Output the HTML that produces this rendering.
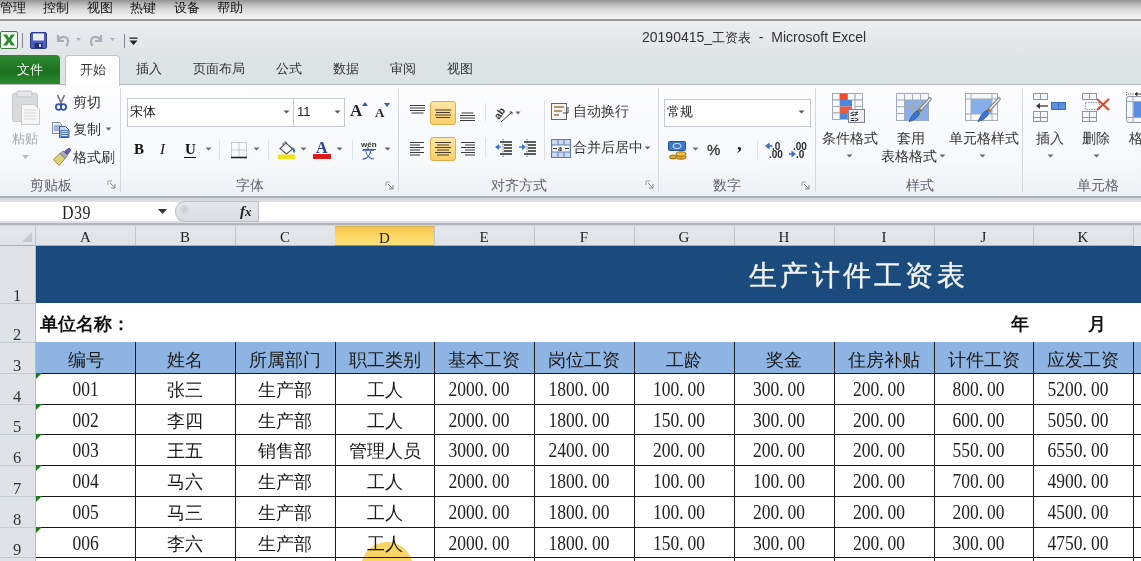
<!DOCTYPE html>
<html><head><meta charset="utf-8">
<style>
*{box-sizing:border-box;margin:0;padding:0}
html,body{width:1141px;height:561px;overflow:hidden;background:#fff}
body{position:relative;font-family:"Liberation Sans",sans-serif;color:#222}
.a{position:absolute;white-space:nowrap}
#menubar{left:0;top:0;width:1141px;height:19px;background:linear-gradient(#939393,#c2c2c2 28%,#d9d9d9 50%,#ebebeb 78%,#f6f6f6)}
#menubar span{position:absolute;top:0;font-size:13px;line-height:15px;color:#111}
#mline{left:0;top:19px;width:1141px;height:2px;background:#9a9a9a;box-shadow:0 1px 0 #f7f7f7}
#titlebar{left:0;top:21px;width:1141px;height:63px;background:linear-gradient(#eceef1,#e7e8eb 25%,#e2e4e6 55%,#dee3e5 58%,#dde2e5)}
#ribbon{left:0;top:84px;width:1141px;height:114px;background:linear-gradient(#fdfdfe,#f6f8fa 70%,#eef1f5);border-top:1px solid #b3b8bd;border-bottom:2px solid #aab0b6}
.tab{position:absolute;top:61px;font-size:13px;line-height:16px;color:#333}
.sep{position:absolute;top:88px;width:1px;height:104px;background:#d5d9de}
.glabel{position:absolute;top:177px;font-size:12px;line-height:14px;color:#5b6470}
.rt{position:absolute;font-size:12px;line-height:14px;color:#333}
#fbar{left:0;top:198px;width:1141px;height:28px;background:linear-gradient(#d3d7dc,#dde1e5 12%,#e0e3e7 85%,#d0d4d9)}
#namebox{left:0;top:202px;width:178px;height:19px;background:#fff}
#finput{left:259px;top:202px;width:882px;height:19px;background:#fff}
#colhdr{left:0;top:226px;width:1141px;height:20px;background:linear-gradient(#e4e7eb,#dfe2e7)}
.ch{position:absolute;top:0;height:20px;border-right:1px solid #c0c6ce;border-bottom:1px solid #a7afb8;font-family:"Liberation Serif",serif;font-size:15px;line-height:22px;text-align:center;color:#222}
#rowhdr{left:0;top:246px;width:36px;height:315px;background:#dfe3e8;border-right:1px solid #b9bfc7}
.rh{position:absolute;left:0;width:35px;height:1px;background:#c5cad1}
.rn{position:absolute;left:13px;font-family:"Liberation Serif",serif;font-size:16.5px;line-height:16px;color:#333}
.ttl{font-family:"Liberation Serif",serif;font-size:28px;line-height:40px;color:#f4f6f8;letter-spacing:3.3px;-webkit-text-stroke:0.35px #f4f6f8}
.b2{font-size:18px;line-height:22px;font-weight:bold;color:#111}
.hl{left:36px;width:1105px;height:1px;background:#1a1a1a}
.vl{top:342px;width:1px;height:219px;background:#1a1a1a}
.ct{text-align:center;font-size:18px;line-height:22px;color:#1a1a1a}
.num{text-align:center;font-family:"Liberation Serif",serif;font-size:17.5px;line-height:20px;color:#222;transform:scaleY(1.15);transform-origin:50% 80%}
.tri{width:0;height:0;border-top:6px solid #1e7a1e;border-right:6px solid transparent}
</style></head><body>
<div id="menubar" class="a">
<span style="left:0">管理</span><span style="left:43px">控制</span><span style="left:87px">视图</span><span style="left:130px">热键</span><span style="left:174px">设备</span><span style="left:217px">帮助</span>
</div>
<div id="mline" class="a"></div>
<div id="titlebar" class="a"></div>
<div class="a" style="left:642px;top:28px;font-size:14px;line-height:18px;color:#333">20190415_<span style="font-size:13px">工资表</span> &nbsp;-&nbsp; Microsoft Excel</div>

<div class="a" style="left:0;top:55px;width:60px;height:30px;background:linear-gradient(#2f8a33,#1c7020 55%,#2c8d30);border-radius:0 4px 0 0;color:#f4f8f0;font-size:13px;line-height:30px;text-align:center">文件</div>
<div class="a" style="left:65px;top:55px;width:55px;height:31px;background:#fff;border:1px solid #bfc5cc;border-bottom:none;border-radius:4px 4px 0 0;font-size:13px;line-height:27px;text-align:center;color:#333;z-index:3">开始</div>
<div class="tab" style="left:136px">插入</div>
<div class="tab" style="left:193px">页面布局</div>
<div class="tab" style="left:276px">公式</div>
<div class="tab" style="left:333px">数据</div>
<div class="tab" style="left:390px">审阅</div>
<div class="tab" style="left:447px">视图</div>

<div id="ribbon" class="a"></div>

<div id="fbar" class="a"></div>
<div class="a" style="left:0;top:223px;width:1141px;height:2px;background:#b3b7bc"></div>
<div id="namebox" class="a"></div>
<div id="finput" class="a"></div>
<div class="a" style="left:62px;top:204px;font-family:'Liberation Serif',serif;font-size:16px;line-height:18px;color:#222;letter-spacing:0.5px;transform:scaleY(1.12)">D39</div>

<div id="colhdr" class="a">
<div class="ch" style="left:0;width:36px"></div>
<div class="ch" style="left:36px;width:100px">A</div>
<div class="ch" style="left:135px;width:101px">B</div>
<div class="ch" style="left:235px;width:101px">C</div>
<div class="ch" style="left:335px;width:100px;background:linear-gradient(#f7c44e,#fcd968 60%,#fde07a);border-top:1px solid #d9b25a;border-bottom-color:#a08850">D</div>
<div class="ch" style="left:434px;width:101px">E</div>
<div class="ch" style="left:534px;width:101px">F</div>
<div class="ch" style="left:634px;width:101px">G</div>
<div class="ch" style="left:734px;width:101px">H</div>
<div class="ch" style="left:834px;width:101px">I</div>
<div class="ch" style="left:934px;width:100px">J</div>
<div class="ch" style="left:1033px;width:101px">K</div>
</div>

<div id="rowhdr" class="a"></div>
<div class="rh a" style="top:303px"></div>
<div class="rn a" style="top:288px">1</div>
<div class="rh a" style="top:342px"></div>
<div class="rn a" style="top:327px">2</div>
<div class="rh a" style="top:373px"></div>
<div class="rn a" style="top:358px">3</div>
<div class="rh a" style="top:404px"></div>
<div class="rn a" style="top:389px">4</div>
<div class="rh a" style="top:434px"></div>
<div class="rn a" style="top:419px">5</div>
<div class="rh a" style="top:465px"></div>
<div class="rn a" style="top:450px">6</div>
<div class="rh a" style="top:496px"></div>
<div class="rn a" style="top:481px">7</div>
<div class="rh a" style="top:527px"></div>
<div class="rn a" style="top:512px">8</div>
<div class="rh a" style="top:557px"></div>
<div class="rn a" style="top:542px">9</div>

<!-- QAT -->
<svg class="a" style="left:0;top:31px" width="18" height="18" viewBox="0 0 18 18"><rect x="0.5" y="0.5" width="17" height="17" rx="1.5" fill="#f4f8f2" stroke="#3f7d46"/><path d="M3 3.5h4l2 3.5 2-3.5h4l-4 5.5 4 5.5h-4l-2-3.5-2 3.5H3l4-5.5z" fill="#2f8a36"/></svg>
<div class="a" style="left:22px;top:33px;width:1px;height:15px;background:#7d8590"></div>
<svg class="a" style="left:30px;top:32px" width="17" height="17" viewBox="0 0 17 17"><rect x="0.5" y="0.5" width="16" height="16" rx="1.5" fill="#4a5fbf" stroke="#2c3a8c"/><rect x="3" y="1.5" width="11" height="7" fill="#e9eef8"/><rect x="4.5" y="11" width="8" height="5" fill="#23306e"/><rect x="9" y="12" width="2" height="3" fill="#cfd6ec"/></svg>
<svg class="a" style="left:55px;top:33px" width="28" height="15" viewBox="0 0 28 15"><path d="M3 2v6h6M3.5 7.5C5 4 8.5 3 11 4.5c2.5 1.5 2.8 5.5 0.5 8.5" fill="none" stroke="#a9afb7" stroke-width="2.2"/><path d="M21 5h5l-2.5 3z" fill="#a9afb7"/></svg>
<svg class="a" style="left:89px;top:33px" width="28" height="15" viewBox="0 0 28 15"><path d="M12 2v6H6M11.5 7.5C10 4 6.5 3 4 4.5 1.5 6 1.2 10 3.5 13" fill="none" stroke="#a9afb7" stroke-width="2.2"/><path d="M21 5h5l-2.5 3z" fill="#a9afb7"/></svg>
<div class="a" style="left:124px;top:34px;width:1px;height:14px;background:#7d8590"></div>
<svg class="a" style="left:129px;top:37px" width="9" height="9" viewBox="0 0 9 9"><rect x="0.5" y="0.5" width="8" height="1.3" fill="#222"/><path d="M0.5 3.5h8L4.5 8z" fill="#222"/></svg>

<!-- group separators -->
<div class="sep" style="left:120px"></div>
<div class="sep" style="left:398px"></div>
<div class="sep" style="left:658px"></div>
<div class="sep" style="left:815px"></div>
<div class="sep" style="left:1022px"></div>

<!-- Clipboard -->
<svg class="a" style="left:11px;top:90px" width="31" height="35" viewBox="0 0 31 35"><rect x="1.5" y="3.5" width="25" height="28" rx="2" fill="#d9dadc" stroke="#c4c6c9"/><rect x="6" y="1" width="15" height="6" rx="1.5" fill="#e6e7e8" stroke="#bdbfc2"/><path d="M10.5 14.5h13l5 5v15h-18z" fill="#f6f6f6" stroke="#c9cacc"/><path d="M13 20h12M13 23h12M13 26h12M13 29h12" stroke="#d8d8d8"/></svg>
<div class="rt" style="left:12px;top:132px;color:#a4a6a9;font-size:13px">粘贴</div>
<svg class="a" style="left:22px;top:155px" width="7" height="5" viewBox="0 0 7 5"><path d="M0 0h7L3.5 4z" fill="#b5b8bc"/></svg>
<svg class="a" style="left:54px;top:94px" width="14" height="17" viewBox="0 0 14 17"><path d="M3.5 1l4.5 10M10.5 1L6 11" stroke="#6d7178" stroke-width="1.6"/><ellipse cx="4.5" cy="13" rx="2.6" ry="2.8" fill="#fff" stroke="#2f55a8" stroke-width="1.8"/><ellipse cx="9.5" cy="13" rx="2.6" ry="2.8" fill="#fff" stroke="#2f55a8" stroke-width="1.8"/></svg>
<div class="rt" style="left:73px;top:96px;font-size:13.5px">剪切</div>
<svg class="a" style="left:52px;top:122px" width="18" height="16" viewBox="0 0 18 16"><path d="M0.5 0.5h7l2 2v9h-9z" fill="#e9eef6" stroke="#7b8fb3"/><path d="M2 4h6M2 6h6M2 8h6" stroke="#5d79b0"/><path d="M7.5 4.5h6l3.5 3.5v7.5h-9.5z" fill="#cfdcf0" stroke="#3a5c9c"/><rect x="8.5" y="8" width="8" height="7" fill="#4d77c0"/><path d="M9.5 9.5h6M9.5 11.5h6M9.5 13.5h6" stroke="#d9e6f8"/></svg>
<div class="rt" style="left:73px;top:123px;font-size:13.5px">复制</div>
<svg class="a" style="left:105px;top:127px" width="7" height="5" viewBox="0 0 7 5"><path d="M0.5 0.5h6L3.5 3.5z" fill="#666"/></svg>
<svg class="a" style="left:52px;top:147px" width="20" height="20" viewBox="0 0 20 20"><path d="M1.5 12.5l6.5-6 5 5-6 7z" fill="#e8d978" stroke="#8b7c3a" stroke-width="0.9"/><path d="M4 14l5-4M6 16l4.5-4" stroke="#c9b450" stroke-width="0.8"/><path d="M8 6.5l3-2.5 4.5 4.5-2.5 3z" fill="#a9aeb6" stroke="#6b7079" stroke-width="0.8"/><path d="M12.5 4.5l4.5-3.5 2 2-3.5 4.5z" fill="#6c5fbf" stroke="#3f3790" stroke-width="0.8"/></svg>
<div class="rt" style="left:73px;top:151px;font-size:13.5px">格式刷</div>
<div class="glabel" style="left:30px;top:179px;font-size:13.5px">剪贴板</div>

<!-- launcher icons -->
<svg class="a" style="left:107px;top:180px" width="9" height="9" viewBox="0 0 9 9"><path d="M1 1h4M1 1v4" stroke="#9aa1aa"/><path d="M3 3l5 5M8 4v4H4" stroke="#7d8590" fill="none"/></svg>
<svg class="a" style="left:385px;top:181px" width="9" height="9" viewBox="0 0 9 9"><path d="M1 1h4M1 1v4" stroke="#9aa1aa"/><path d="M3 3l5 5M8 4v4H4" stroke="#7d8590" fill="none"/></svg>
<svg class="a" style="left:645px;top:180px" width="9" height="9" viewBox="0 0 9 9"><path d="M1 1h4M1 1v4" stroke="#9aa1aa"/><path d="M3 3l5 5M8 4v4H4" stroke="#7d8590" fill="none"/></svg>
<svg class="a" style="left:801px;top:181px" width="9" height="9" viewBox="0 0 9 9"><path d="M1 1h4M1 1v4" stroke="#9aa1aa"/><path d="M3 3l5 5M8 4v4H4" stroke="#7d8590" fill="none"/></svg>

<!-- Font group -->
<div class="a" style="left:127px;top:98px;width:167px;height:29px;background:#fff;border:1px solid #c5cad0"></div>
<div class="a" style="left:293px;top:98px;width:52px;height:29px;background:#fff;border:1px solid #c5cad0"></div>
<div class="rt" style="left:130px;top:104px;font-size:13px;line-height:15px;color:#222">宋体</div>
<div class="rt" style="left:297px;top:104px;font-size:13px;line-height:15px;color:#222">11</div>
<svg class="a" style="left:283px;top:110px" width="7" height="5" viewBox="0 0 7 5"><path d="M0.5 0.5h6L3.5 3.5z" fill="#555"/></svg>
<svg class="a" style="left:334px;top:110px" width="7" height="5" viewBox="0 0 7 5"><path d="M0.5 0.5h6L3.5 3.5z" fill="#555"/></svg>
<div class="a" style="left:350px;top:102px;font-family:'Liberation Serif',serif;font-weight:bold;font-size:17px;line-height:18px;color:#222">A</div>
<svg class="a" style="left:362px;top:102px" width="6" height="4" viewBox="0 0 6 4"><path d="M0 4h6L3 0z" fill="#2f5fa8"/></svg>
<div class="a" style="left:375px;top:106px;font-family:'Liberation Serif',serif;font-weight:bold;font-size:13px;line-height:14px;color:#222">A</div>
<svg class="a" style="left:384px;top:103px" width="6" height="4" viewBox="0 0 6 4"><path d="M0 0h6L3 4z" fill="#2f5fa8"/></svg>
<div class="a" style="left:134px;top:141px;font-family:'Liberation Serif',serif;font-weight:bold;font-size:15px;line-height:17px;color:#111">B</div>
<div class="a" style="left:160px;top:141px;font-family:'Liberation Serif',serif;font-style:italic;font-size:15px;line-height:17px;color:#111">I</div>
<div class="a" style="left:185px;top:141px;font-family:'Liberation Serif',serif;font-weight:bold;font-size:15px;line-height:17px;color:#111">U</div>
<div class="a" style="left:184px;top:157px;width:12px;height:1px;background:#111"></div>
<svg class="a" style="left:205px;top:147px" width="7" height="5" viewBox="0 0 7 5"><path d="M0.5 0.5h6L3.5 3.5z" fill="#666"/></svg>
<div class="a" style="left:219px;top:140px;width:1px;height:20px;background:#dde0e4"></div>
<svg class="a" style="left:231px;top:142px" width="16" height="17" viewBox="0 0 16 17"><path d="M0.5 0.5h15v15M0.5 0.5v15M8 0.5v15M0.5 8h15" stroke="#9aa0a8" stroke-dasharray="1 1" fill="none"/><path d="M0 15.5h16" stroke="#222" stroke-width="1.6"/></svg>
<svg class="a" style="left:253px;top:147px" width="7" height="5" viewBox="0 0 7 5"><path d="M0.5 0.5h6L3.5 3.5z" fill="#666"/></svg>
<div class="a" style="left:268px;top:140px;width:1px;height:20px;background:#dde0e4"></div>
<svg class="a" style="left:277px;top:140px" width="19" height="20" viewBox="0 0 19 20"><path d="M3 8.5l6-5.5 6.5 6-6 5z" fill="#fff" stroke="#555" stroke-width="1.1"/><path d="M6 5c0-3 3-4 4-2" stroke="#555" fill="none"/><path d="M14 8c2.5 0 3.5 2 3 4.5" stroke="#3d6fc2" stroke-width="2" fill="none"/><rect x="1" y="14.5" width="17" height="4.5" fill="#f2e21c"/></svg>
<svg class="a" style="left:300px;top:147px" width="7" height="5" viewBox="0 0 7 5"><path d="M0.5 0.5h6L3.5 3.5z" fill="#666"/></svg>
<div class="a" style="left:316px;top:141px;font-family:'Liberation Serif',serif;font-weight:bold;font-size:16px;line-height:14px;color:#243f8c">A</div>
<div class="a" style="left:313px;top:154px;width:18px;height:5px;background:#e11b1b"></div>
<svg class="a" style="left:336px;top:147px" width="7" height="5" viewBox="0 0 7 5"><path d="M0.5 0.5h6L3.5 3.5z" fill="#666"/></svg>
<div class="a" style="left:352px;top:140px;width:1px;height:20px;background:#dde0e4"></div>
<div class="a" style="left:361px;top:141px;font-size:8px;line-height:8px;color:#333;font-weight:bold">wén</div><div class="a" style="left:363px;top:149px;width:13px;height:1px;background:#3a5aa8"></div>
<div class="a" style="left:362px;top:147px;font-size:13px;line-height:13px;color:#3a5aa8">文</div>
<svg class="a" style="left:384px;top:147px" width="7" height="5" viewBox="0 0 7 5"><path d="M0.5 0.5h6L3.5 3.5z" fill="#666"/></svg>
<div class="glabel" style="left:236px;top:179px;font-size:13.5px">字体</div>

<!-- Alignment group -->
<svg class="a" style="left:409px;top:104px" width="17" height="10" viewBox="0 0 17 10"><path d="M1 1.5h15M1 4h15M1 6.5h15M2.5 9h12" stroke="#3a3a3a" stroke-width="1.2"/></svg>
<div class="a" style="left:430px;top:101px;width:26px;height:24px;background:linear-gradient(#fde6a6,#fbcf68);border:1px solid #dcae4c;border-radius:3px"></div>
<svg class="a" style="left:434px;top:109px" width="18" height="10" viewBox="0 0 18 10"><path d="M1 1h16M2 3.5h14M1 6h16M2 8.5h14" stroke="#4a3e2a" stroke-width="1.2"/></svg>
<svg class="a" style="left:459px;top:112px" width="17" height="10" viewBox="0 0 17 10"><path d="M2.5 1h12M1 3.5h15M1 6h15M1 8.5h15" stroke="#3a3a3a" stroke-width="1.2"/></svg>
<svg class="a" style="left:409px;top:141px" width="17" height="15" viewBox="0 0 17 15"><path d="M1 1.5h14M1 4h10M1 6.5h14M1 9h10M1 11.5h14M1 14h10" stroke="#3a3a3a" stroke-width="1.2"/></svg>
<div class="a" style="left:430px;top:137px;width:26px;height:24px;background:linear-gradient(#fde6a6,#fbcf68);border:1px solid #dcae4c;border-radius:3px"></div>
<svg class="a" style="left:434px;top:141px" width="18" height="15" viewBox="0 0 18 15"><path d="M1 1.5h16M3 4h12M1 6.5h16M3 9h12M1 11.5h16M3 14h12" stroke="#4a3e2a" stroke-width="1.2"/></svg>
<svg class="a" style="left:459px;top:141px" width="17" height="15" viewBox="0 0 17 15"><path d="M2 1.5h14M6 4h10M2 6.5h14M6 9h10M2 11.5h14M6 14h10" stroke="#3a3a3a" stroke-width="1.2"/></svg>
<div class="a" style="left:485px;top:103px;width:1px;height:18px;background:#dde0e4"></div>
<div class="a" style="left:485px;top:138px;width:1px;height:20px;background:#dde0e4"></div>
<svg class="a" style="left:493px;top:103px" width="30" height="20" viewBox="0 0 30 20"><text x="0" y="0" transform="translate(6 17) rotate(-55)" font-family="Liberation Sans" font-weight="bold" font-size="10" fill="#333">ab</text><path d="M8 19L19 9M16.5 9h2.5v2.5" stroke="#444" stroke-width="1" fill="none"/><path d="M22.5 8.5h5l-2.5 3z" fill="#666"/></svg>
<svg class="a" style="left:494px;top:139px" width="19" height="18" viewBox="0 0 19 18"><path d="M9 0v18" stroke="#555" stroke-dasharray="1.2 1.2"/><path d="M6 3h12M10 6h8M10 9h8M10 12h8M6 15h12" stroke="#2a2a2a" stroke-width="1.3"/><path d="M1 8l4-3v6z" fill="#3a72c8"/><path d="M4 8h3" stroke="#3a72c8" stroke-width="1.3"/></svg>
<svg class="a" style="left:518px;top:139px" width="19" height="18" viewBox="0 0 19 18"><path d="M9 0v18" stroke="#555" stroke-dasharray="1.2 1.2"/><path d="M6 3h12M10 6h8M10 9h8M10 12h8M6 15h12" stroke="#2a2a2a" stroke-width="1.3"/><path d="M8 8l-4-3v6z" fill="#3a72c8"/><path d="M1 8h3" stroke="#3a72c8" stroke-width="1.3"/></svg>
<div class="a" style="left:544px;top:100px;width:1px;height:60px;background:#dde0e4"></div>
<svg class="a" style="left:551px;top:103px" width="20" height="18" viewBox="0 0 20 18"><rect x="0.5" y="0.5" width="15" height="16" fill="#f5f5f5" stroke="#666"/><path d="M3 4h10M3 8h8M3 12h5" stroke="#9a7a3a" stroke-width="1.5"/><path d="M17 4v6h-5" stroke="#444" fill="none"/></svg>
<div class="rt" style="left:573px;top:105px;font-size:13.5px">自动换行</div>
<svg class="a" style="left:551px;top:139px" width="20" height="19" viewBox="0 0 20 19"><rect x="0.5" y="0.5" width="19" height="18" fill="#c9daf2" stroke="#5c7ab0"/><rect x="2" y="6" width="16" height="7" fill="#fff"/><path d="M0.5 6h19M0.5 13h19M7 0.5v5M13 0.5v5M7 13.5v5M13 13.5v5" stroke="#5c7ab0"/><text x="7" y="12" font-family="Liberation Serif" font-weight="bold" font-size="8" fill="#222">a</text><path d="M2 9.5h4M14 9.5h4" stroke="#333"/></svg>
<div class="rt" style="left:573px;top:141px;font-size:13.5px">合并后居中</div>
<svg class="a" style="left:644px;top:146px" width="7" height="5" viewBox="0 0 7 5"><path d="M0.5 0.5h6L3.5 3.5z" fill="#666"/></svg>
<div class="glabel" style="left:491px;top:179px;font-size:13.5px">对齐方式</div>

<!-- Number group -->
<div class="a" style="left:664px;top:99px;width:147px;height:28px;background:#fff;border:1px solid #c5cad0"></div>
<div class="rt" style="left:667px;top:104px;font-size:13px;line-height:15px;color:#222">常规</div>
<svg class="a" style="left:798px;top:110px" width="7" height="5" viewBox="0 0 7 5"><path d="M0.5 0.5h6L3.5 3.5z" fill="#555"/></svg>
<svg class="a" style="left:668px;top:141px" width="20" height="19" viewBox="0 0 20 19"><rect x="0.5" y="0.5" width="17" height="9" rx="1" fill="#3d79c9" stroke="#24559a"/><ellipse cx="9" cy="5" rx="4" ry="2.6" fill="none" stroke="#d6e6f8"/><ellipse cx="13" cy="16" rx="5" ry="2.2" fill="#e0a82a" stroke="#9b6d12"/><ellipse cx="13" cy="13" rx="5" ry="2.2" fill="#efc04a" stroke="#9b6d12"/><ellipse cx="5" cy="16" rx="3.5" ry="2" fill="#e0a82a" stroke="#9b6d12"/></svg>
<svg class="a" style="left:692px;top:147px" width="7" height="5" viewBox="0 0 7 5"><path d="M0.5 0.5h6L3.5 3.5z" fill="#666"/></svg>
<div class="a" style="left:707px;top:142px;font-size:15px;line-height:16px;color:#333;-webkit-text-stroke:0.3px #333">%</div>
<div class="a" style="left:737px;top:136px;font-family:'Liberation Serif',serif;font-size:19px;line-height:16px;font-weight:bold;color:#222">,</div>
<div class="a" style="left:757px;top:140px;width:1px;height:20px;background:#dde0e4"></div>
<svg class="a" style="left:764px;top:141px" width="22" height="18" viewBox="0 0 22 18"><path d="M1 5l4.5-3.5v7z" fill="#3a6fc4"/><path d="M5 5h3.5" stroke="#3a6fc4" stroke-width="1.6"/><text x="8" y="9" font-family="Liberation Sans" font-weight="bold" font-size="10" fill="#2a2a2a">.0</text><text x="5" y="17" font-family="Liberation Sans" font-weight="bold" font-size="10" fill="#2a2a2a">.00</text></svg>
<svg class="a" style="left:788px;top:141px" width="22" height="18" viewBox="0 0 22 18"><text x="5" y="9" font-family="Liberation Sans" font-weight="bold" font-size="10" fill="#2a2a2a">.00</text><path d="M8 13l-4.5-3.5v7z" fill="#3a6fc4"/><path d="M1 13h3.5" stroke="#3a6fc4" stroke-width="1.6"/><text x="8" y="17" font-family="Liberation Sans" font-weight="bold" font-size="10" fill="#2a2a2a">.0</text></svg>
<div class="glabel" style="left:713px;top:179px;font-size:13.5px">数字</div>

<!-- Styles group -->
<svg class="a" style="left:831px;top:92px" width="36" height="32" viewBox="0 0 36 32"><g fill="#f6f8fb" stroke="#a3abb5"><rect x="1.5" y="1.5" width="7.5" height="6.5"/><rect x="9" y="1.5" width="7.5" height="6.5"/><rect x="16.5" y="1.5" width="7.5" height="6.5"/><rect x="24" y="1.5" width="7.5" height="6.5"/><rect x="1.5" y="8" width="7.5" height="6.5"/><rect x="24" y="8" width="7.5" height="6.5"/><rect x="1.5" y="14.5" width="7.5" height="6.5"/><rect x="24" y="14.5" width="7.5" height="6.5"/><rect x="1.5" y="21" width="7.5" height="6.5"/><rect x="16.5" y="21" width="7.5" height="6.5"/><rect x="24" y="21" width="7.5" height="6.5"/></g><rect x="9" y="1.5" width="7.5" height="6.5" fill="#ee4a2e"/><rect x="9" y="8" width="12" height="6.5" fill="#4d86dc"/><rect x="9" y="14.5" width="12" height="6.5" fill="#ee5a3e"/><rect x="9" y="21" width="7.5" height="6.5" fill="#4d86dc"/><rect x="17.5" y="17.5" width="16" height="13" fill="#eceef1" stroke="#7b838d"/><text x="19.5" y="23.5" font-family="Liberation Sans" font-weight="bold" font-size="7" fill="#222">≤≠</text><text x="19.5" y="30" font-family="Liberation Sans" font-weight="bold" font-size="7" fill="#222">=&gt;</text></svg>
<div class="rt" style="left:822px;top:132px;font-size:13.5px">条件格式</div>
<svg class="a" style="left:846px;top:154px" width="7" height="5" viewBox="0 0 7 5"><path d="M0.5 0.5h6L3.5 3.5z" fill="#666"/></svg>
<svg class="a" style="left:895px;top:92px" width="40" height="32" viewBox="0 0 40 32"><rect x="1.5" y="1.5" width="32" height="27" fill="#f6f8fb" stroke="#a3abb5"/><rect x="9.5" y="8" width="24" height="20.5" fill="#86aeea"/><path d="M1.5 8h32M1.5 14.75h32M1.5 21.5h32M9.5 1.5v27M17.5 1.5v27M25.5 1.5v27" stroke="#a3abb5"/><path d="M35 7L25 18" stroke="#7a828c" stroke-width="3.6" stroke-linecap="round"/><path d="M35 7L25 18" stroke="#e9ecef" stroke-width="1.6" stroke-linecap="round"/><path d="M23.5 16.5l3 3" stroke="#a6783a" stroke-width="2.4"/><path d="M23 18.5c-3 1-5 3.5-6.5 6l-2.5 5c4-1 8.5-3 10.5-8z" fill="#3c74d0" stroke="#23509a" stroke-width="0.8"/></svg>
<div class="rt" style="left:897px;top:132px;font-size:13.5px">套用</div>
<div class="rt" style="left:881px;top:150px;font-size:13.5px">表格格式</div>
<svg class="a" style="left:939px;top:154px" width="7" height="5" viewBox="0 0 7 5"><path d="M0.5 0.5h6L3.5 3.5z" fill="#666"/></svg>
<svg class="a" style="left:964px;top:92px" width="40" height="32" viewBox="0 0 40 32"><rect x="1.5" y="1.5" width="32" height="27" fill="#f6f8fb" stroke="#a3abb5"/><rect x="7" y="7" width="21" height="15" fill="#86aeea"/><path d="M1.5 7h32M1.5 22h32M7 1.5v27M28 1.5v27" stroke="#a3abb5"/><path d="M35 7L25 18" stroke="#7a828c" stroke-width="3.6" stroke-linecap="round"/><path d="M35 7L25 18" stroke="#e9ecef" stroke-width="1.6" stroke-linecap="round"/><path d="M23.5 16.5l3 3" stroke="#a6783a" stroke-width="2.4"/><path d="M23 18.5c-3 1-5 3.5-6.5 6l-2.5 5c4-1 8.5-3 10.5-8z" fill="#3c74d0" stroke="#23509a" stroke-width="0.8"/></svg>
<div class="rt" style="left:949px;top:132px;font-size:13.5px">单元格样式</div>
<svg class="a" style="left:979px;top:154px" width="7" height="5" viewBox="0 0 7 5"><path d="M0.5 0.5h6L3.5 3.5z" fill="#666"/></svg>
<div class="glabel" style="left:906px;top:179px;font-size:13.5px">样式</div>

<!-- Cells group -->
<svg class="a" style="left:1033px;top:93px" width="34" height="29" viewBox="0 0 34 29"><g stroke="#8e97a2" fill="#f4f6f9"><rect x="0.5" y="0.5" width="7" height="6"/><rect x="7.5" y="0.5" width="7" height="6"/><rect x="0.5" y="18.5" width="7" height="6"/><rect x="7.5" y="18.5" width="7" height="6"/><rect x="0.5" y="24.5" width="7" height="4"/><rect x="7.5" y="24.5" width="7" height="4"/></g><g stroke="#3a6fc0" fill="#5b8ee0"><rect x="18.5" y="9.5" width="7" height="7"/><rect x="25.5" y="9.5" width="7" height="7"/></g><path d="M4 13h11" stroke="#333" stroke-width="1.3"/><path d="M3 13l4-3v6z" fill="#333"/></svg>
<div class="rt" style="left:1036px;top:132px;font-size:13.5px">插入</div>
<svg class="a" style="left:1047px;top:154px" width="7" height="5" viewBox="0 0 7 5"><path d="M0.5 0.5h6L3.5 3.5z" fill="#666"/></svg>
<svg class="a" style="left:1082px;top:93px" width="30" height="29" viewBox="0 0 30 29"><g stroke="#8e97a2" fill="#f4f6f9"><rect x="0.5" y="0.5" width="7" height="6"/><rect x="7.5" y="0.5" width="7" height="6"/><rect x="0.5" y="18.5" width="7" height="6"/><rect x="7.5" y="18.5" width="7" height="6"/><rect x="0.5" y="24.5" width="7" height="4"/><rect x="7.5" y="24.5" width="7" height="4"/></g><rect x="3.5" y="9.5" width="14" height="7" fill="none" stroke="#8e97a2" stroke-dasharray="1.5 1"/><path d="M15 6l12 11M27 6L15 17" stroke="#e0452a" stroke-width="2"/></svg>
<div class="rt" style="left:1082px;top:132px;font-size:13.5px">删除</div>
<svg class="a" style="left:1093px;top:154px" width="7" height="5" viewBox="0 0 7 5"><path d="M0.5 0.5h6L3.5 3.5z" fill="#666"/></svg>
<svg class="a" style="left:1125px;top:91px" width="16" height="34" viewBox="0 0 16 34"><path d="M1.5 1v4M3 3h6" stroke="#555" stroke-dasharray="1.2 1"/><path d="M10 3h6M10 3l2-1.5v3z" stroke="#333" fill="#333"/><rect x="1.5" y="5.5" width="20" height="26" rx="2.5" fill="#f4f6f9" stroke="#8e97a2"/><path d="M8 5.5v26M1.5 10.5h20M1.5 26.5h20" stroke="#a3abb5"/><rect x="8.5" y="11" width="8" height="15" fill="#5b8ee0"/></svg>
<div class="rt" style="left:1129px;top:132px;font-size:13.5px">格</div>
<div class="glabel" style="left:1077px;top:179px;font-size:13.5px">单元格</div>

<!-- formula bar pieces -->
<svg class="a" style="left:158px;top:209px" width="9" height="6" viewBox="0 0 9 6"><path d="M0 0h9L4.5 5z" fill="#333"/></svg>
<div class="a" style="left:175px;top:201px;width:84px;height:21px;border-radius:10px 0 0 10px;background:linear-gradient(#e6e9ec,#d9dde2);border:1px solid #b9bec4"></div>
<div class="a" style="left:180px;top:205px;width:9px;height:9px;border-radius:50%;background:radial-gradient(#c9cdd2,#dfe2e6);"></div>
<div class="a" style="left:240px;top:202px;font-family:'Liberation Serif',serif;font-style:italic;font-weight:bold;font-size:15px;line-height:18px;color:#222">f<span style="font-size:13px">x</span></div>
<div class="a" style="left:22px;top:232px;width:0;height:0;border-left:10px solid transparent;border-bottom:10px solid #c4c9d0"></div>

<div class="a" style="left:36px;top:246px;width:1105px;height:57px;background:#1b4b7d"></div>
<div class="a ttl" style="left:749px;top:256px">生产计件工资表</div>
<div class="a b2" style="left:40px;top:313px">单位名称：</div>
<div class="a b2" style="left:1011px;top:313px">年</div>
<div class="a b2" style="left:1088px;top:313px">月</div>
<div class="a" style="left:36px;top:342px;width:1105px;height:31px;background:#8db4e2"></div>
<div class="a hl" style="top:373px"></div>
<div class="a hl" style="top:404px"></div>
<div class="a hl" style="top:434px"></div>
<div class="a hl" style="top:465px"></div>
<div class="a hl" style="top:496px"></div>
<div class="a hl" style="top:527px"></div>
<div class="a hl" style="top:557px"></div>
<div class="a hl" style="top:588px"></div>
<div class="a vl" style="left:135px"></div>
<div class="a vl" style="left:235px"></div>
<div class="a vl" style="left:335px"></div>
<div class="a vl" style="left:434px"></div>
<div class="a vl" style="left:534px"></div>
<div class="a vl" style="left:634px"></div>
<div class="a vl" style="left:734px"></div>
<div class="a vl" style="left:834px"></div>
<div class="a vl" style="left:934px"></div>
<div class="a vl" style="left:1033px"></div>
<div class="a vl" style="left:1133px"></div>
<div class="a ct" style="left:36px;width:99px;top:349px">编号</div>
<div class="a ct" style="left:135px;width:100px;top:349px">姓名</div>
<div class="a ct" style="left:235px;width:100px;top:349px">所属部门</div>
<div class="a ct" style="left:335px;width:99px;top:349px">职工类别</div>
<div class="a ct" style="left:434px;width:100px;top:349px">基本工资</div>
<div class="a ct" style="left:534px;width:100px;top:349px">岗位工资</div>
<div class="a ct" style="left:634px;width:100px;top:349px">工龄</div>
<div class="a ct" style="left:734px;width:100px;top:349px">奖金</div>
<div class="a ct" style="left:834px;width:100px;top:349px">住房补贴</div>
<div class="a ct" style="left:934px;width:99px;top:349px">计件工资</div>
<div class="a ct" style="left:1033px;width:100px;top:349px">应发工资</div>
<div class="a num" style="left:36px;width:99px;top:380px">001</div>
<div class="a ct" style="left:135px;width:100px;top:379px">张三</div>
<div class="a ct" style="left:235px;width:100px;top:379px">生产部</div>
<div class="a ct" style="left:335px;width:99px;top:379px">工人</div>
<div class="a num" style="left:429px;width:100px;top:380px">2000.<span style="margin-left:4px">00</span></div>
<div class="a num" style="left:529px;width:100px;top:380px">1800.<span style="margin-left:4px">00</span></div>
<div class="a num" style="left:629px;width:100px;top:380px">100.<span style="margin-left:4px">00</span></div>
<div class="a num" style="left:729px;width:100px;top:380px">300.<span style="margin-left:4px">00</span></div>
<div class="a num" style="left:829px;width:100px;top:380px">200.<span style="margin-left:4px">00</span></div>
<div class="a num" style="left:929px;width:99px;top:380px">800.<span style="margin-left:4px">00</span></div>
<div class="a num" style="left:1028px;width:100px;top:380px">5200.<span style="margin-left:4px">00</span></div>
<div class="a tri" style="left:36px;top:373px"></div>
<div class="a num" style="left:36px;width:99px;top:411px">002</div>
<div class="a ct" style="left:135px;width:100px;top:410px">李四</div>
<div class="a ct" style="left:235px;width:100px;top:410px">生产部</div>
<div class="a ct" style="left:335px;width:99px;top:410px">工人</div>
<div class="a num" style="left:429px;width:100px;top:411px">2000.<span style="margin-left:4px">00</span></div>
<div class="a num" style="left:529px;width:100px;top:411px">1800.<span style="margin-left:4px">00</span></div>
<div class="a num" style="left:629px;width:100px;top:411px">150.<span style="margin-left:4px">00</span></div>
<div class="a num" style="left:729px;width:100px;top:411px">300.<span style="margin-left:4px">00</span></div>
<div class="a num" style="left:829px;width:100px;top:411px">200.<span style="margin-left:4px">00</span></div>
<div class="a num" style="left:929px;width:99px;top:411px">600.<span style="margin-left:4px">00</span></div>
<div class="a num" style="left:1028px;width:100px;top:411px">5050.<span style="margin-left:4px">00</span></div>
<div class="a tri" style="left:36px;top:404px"></div>
<div class="a num" style="left:36px;width:99px;top:441px">003</div>
<div class="a ct" style="left:135px;width:100px;top:440px">王五</div>
<div class="a ct" style="left:235px;width:100px;top:440px">销售部</div>
<div class="a ct" style="left:335px;width:99px;top:440px">管理人员</div>
<div class="a num" style="left:429px;width:100px;top:441px">3000.<span style="margin-left:4px">00</span></div>
<div class="a num" style="left:529px;width:100px;top:441px">2400.<span style="margin-left:4px">00</span></div>
<div class="a num" style="left:629px;width:100px;top:441px">200.<span style="margin-left:4px">00</span></div>
<div class="a num" style="left:729px;width:100px;top:441px">200.<span style="margin-left:4px">00</span></div>
<div class="a num" style="left:829px;width:100px;top:441px">200.<span style="margin-left:4px">00</span></div>
<div class="a num" style="left:929px;width:99px;top:441px">550.<span style="margin-left:4px">00</span></div>
<div class="a num" style="left:1028px;width:100px;top:441px">6550.<span style="margin-left:4px">00</span></div>
<div class="a tri" style="left:36px;top:434px"></div>
<div class="a num" style="left:36px;width:99px;top:472px">004</div>
<div class="a ct" style="left:135px;width:100px;top:471px">马六</div>
<div class="a ct" style="left:235px;width:100px;top:471px">生产部</div>
<div class="a ct" style="left:335px;width:99px;top:471px">工人</div>
<div class="a num" style="left:429px;width:100px;top:472px">2000.<span style="margin-left:4px">00</span></div>
<div class="a num" style="left:529px;width:100px;top:472px">1800.<span style="margin-left:4px">00</span></div>
<div class="a num" style="left:629px;width:100px;top:472px">100.<span style="margin-left:4px">00</span></div>
<div class="a num" style="left:729px;width:100px;top:472px">100.<span style="margin-left:4px">00</span></div>
<div class="a num" style="left:829px;width:100px;top:472px">200.<span style="margin-left:4px">00</span></div>
<div class="a num" style="left:929px;width:99px;top:472px">700.<span style="margin-left:4px">00</span></div>
<div class="a num" style="left:1028px;width:100px;top:472px">4900.<span style="margin-left:4px">00</span></div>
<div class="a tri" style="left:36px;top:465px"></div>
<div class="a num" style="left:36px;width:99px;top:503px">005</div>
<div class="a ct" style="left:135px;width:100px;top:502px">马三</div>
<div class="a ct" style="left:235px;width:100px;top:502px">生产部</div>
<div class="a ct" style="left:335px;width:99px;top:502px">工人</div>
<div class="a num" style="left:429px;width:100px;top:503px">2000.<span style="margin-left:4px">00</span></div>
<div class="a num" style="left:529px;width:100px;top:503px">1800.<span style="margin-left:4px">00</span></div>
<div class="a num" style="left:629px;width:100px;top:503px">100.<span style="margin-left:4px">00</span></div>
<div class="a num" style="left:729px;width:100px;top:503px">200.<span style="margin-left:4px">00</span></div>
<div class="a num" style="left:829px;width:100px;top:503px">200.<span style="margin-left:4px">00</span></div>
<div class="a num" style="left:929px;width:99px;top:503px">200.<span style="margin-left:4px">00</span></div>
<div class="a num" style="left:1028px;width:100px;top:503px">4500.<span style="margin-left:4px">00</span></div>
<div class="a tri" style="left:36px;top:496px"></div>
<div class="a num" style="left:36px;width:99px;top:534px">006</div>
<div class="a ct" style="left:135px;width:100px;top:533px">李六</div>
<div class="a ct" style="left:235px;width:100px;top:533px">生产部</div>
<div class="a ct" style="left:335px;width:99px;top:533px">工人</div>
<div class="a num" style="left:429px;width:100px;top:534px">2000.<span style="margin-left:4px">00</span></div>
<div class="a num" style="left:529px;width:100px;top:534px">1800.<span style="margin-left:4px">00</span></div>
<div class="a num" style="left:629px;width:100px;top:534px">150.<span style="margin-left:4px">00</span></div>
<div class="a num" style="left:729px;width:100px;top:534px">300.<span style="margin-left:4px">00</span></div>
<div class="a num" style="left:829px;width:100px;top:534px">200.<span style="margin-left:4px">00</span></div>
<div class="a num" style="left:929px;width:99px;top:534px">300.<span style="margin-left:4px">00</span></div>
<div class="a num" style="left:1028px;width:100px;top:534px">4750.<span style="margin-left:4px">00</span></div>
<div class="a tri" style="left:36px;top:527px"></div>
<div class="a" style="left:361px;top:542px;width:52px;height:52px;border-radius:50%;background:#f8d565;mix-blend-mode:multiply;z-index:10"></div>
</body></html>
